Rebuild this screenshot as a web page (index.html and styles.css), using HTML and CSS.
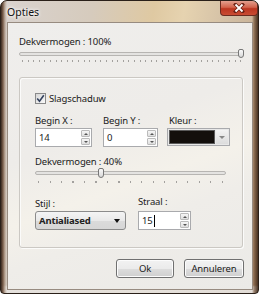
FILE: index.html
```html
<!DOCTYPE html>
<html>
<head>
<meta charset="utf-8">
<link rel="stylesheet" href="styles.css">
</head>
<body>
<div class="window">
  <div class="titlebar">
    <span class="title">Opties</span>
    <div class="close">
      <svg width="12" height="10" viewBox="0 0 12 10"><path d="M2.5 1.5 L9.5 8.5 M9.5 1.5 L2.5 8.5" stroke="#6a2215" stroke-width="3.4" stroke-linecap="square"/><path d="M2.5 1.5 L9.5 8.5 M9.5 1.5 L2.5 8.5" stroke="#ffffff" stroke-width="1.8"/></svg>
    </div>
  </div>
  <div class="client">
    <div class="label">Dekvermogen : 100%</div>
    <div class="slider s1">
      <div class="track"></div>
      <div class="thumb" style="left:219px"></div>
      <div class="ticks"></div>
    </div>
    <div class="group">
      <div class="check">
        <span class="box"><svg width="9" height="9" viewBox="0 0 9 9"><path d="M1.2 4.5 L3.5 7.3 L7.8 1.2" fill="none" stroke="#34425f" stroke-width="1.6"/></svg></span>
        <span>Slagschaduw</span>
      </div>
      <div class="grid3">
        <div class="lbl">Begin X :</div>
        <div class="lbl">Begin Y :</div>
        <div class="lbl">Kleur :</div>
        <div class="spin"><span class="val">14</span><span class="arrows"><span class="up"></span><span class="down"></span></span></div>
        <div class="spin"><span class="val">0</span><span class="arrows"><span class="up"></span><span class="down"></span></span></div>
        <div class="color"><span class="swatch"></span><span class="dd"><span class="tri"></span></span></div>
      </div>
      <div class="label l2">Dekvermogen : 40%</div>
      <div class="slider s2">
        <div class="track"></div>
        <div class="thumb" style="left:63px"></div>
        <div class="ticks"></div>
      </div>
      <div class="bottomrow">
        <div class="field">
          <div class="lbl">Stijl :</div>
          <div class="combo"><span class="ctext">Antialiased</span><span class="tri dark"></span></div>
        </div>
        <div class="field">
          <div class="lbl">Straal :</div>
          <div class="spin s3"><span class="val">15<span class="caret"></span></span><span class="arrows"><span class="up"></span><span class="down"></span></span></div>
        </div>
      </div>
    </div>
    <div class="buttons">
      <div class="btn ok">Ok</div>
      <div class="btn cancel">Annuleren</div>
    </div>
  </div>
</div>
</body>
</html>
```
FILE: styles.css
```css
html, body {
  margin: 0;
  padding: 0;
  background: #ffffff;
}
body {
  font-family: "Noto Sans", "Open Sans", sans-serif;
  font-size: 9.5px;
  letter-spacing: -0.15px;
  color: #1a1a1a;
}
.window {
  width: 259px;
  height: 294px;
  box-sizing: border-box;
  border: 1px solid #2a2019;
  border-radius: 7px 7px 4px 4px;
  background:
    linear-gradient(to bottom, rgba(0,0,0,0) 0, rgba(0,0,0,0) 40px, rgba(0,0,0,0) 100%),
    linear-gradient(to right, rgba(45,28,18,0.92) 0, rgba(100,68,46,0.8) 2px, rgba(150,120,95,0.45) 4px, rgba(255,255,255,0) 6px, rgba(255,255,255,0) 251px, rgba(110,75,48,0.6) 253px, rgba(60,38,22,0.9) 257px),
    linear-gradient(to bottom, rgba(255,255,255,0) 0, rgba(255,255,255,0) 284px, rgba(235,232,228,0.92) 286px, rgba(228,224,220,0.92) 292px),
    linear-gradient(100deg, #d9d3cf 0%, #d6cbbd 30%, #dfc9a2 50%, #e6d3b0 60%, #d2bfa5 75%, #c4ab8f 90%, #b19377 100%);
  display: flex;
  flex-direction: column;
  overflow: hidden;
}
.titlebar {
  height: 21px;
  display: flex;
  align-items: flex-start;
  justify-content: space-between;
}
.title {
  margin: 5px 0 0 6px;
  font-size: 10.5px;
  letter-spacing: 0;
  line-height: 13px;
  color: #111;
  text-shadow: 0 0 4px #fff, 0 0 3px #fff;
}
.close {
  width: 38px;
  height: 15px;
  box-sizing: border-box;
  border: 1px solid #6b2c20;
  border-top: none;
  border-radius: 0 0 4px 4px;
  background: linear-gradient(to bottom, #e3a08e 0%, #d2644c 45%, #bb3620 55%, #c94c33 100%);
  display: flex;
  align-items: center;
  justify-content: center;
}
.client {
  margin: 0 5px 3px 6px;
  width: 246px;
  height: 268px;
  box-sizing: border-box;
  border: 1px solid #978b80;
  background: linear-gradient(160deg, #efeeec 0%, #eeece9 40%, #f4f1ea 58%, #efede9 70%, #ebeae7 100%);
  padding: 12px 0 0 11px;
  display: flex;
  flex-direction: column;
  align-items: flex-start;
}
.label, .lbl {
  line-height: 14px;
  height: 14px;
  white-space: nowrap;
}
.slider {
  position: relative;
  height: 14px;
}
.slider .track {
  position: absolute;
  left: 0;
  right: 2px;
  top: 3px;
  height: 4px;
  box-sizing: border-box;
  border: 1px solid #b7b5b2;
  border-radius: 2px;
  background: #e4e3e1;
}
.slider .thumb {
  position: absolute;
  top: 0;
  width: 6px;
  height: 9px;
  box-sizing: border-box;
  border: 1px solid #777;
  border-radius: 2px 2px 3px 3px;
  background: linear-gradient(to bottom, #fafafa, #d9d9d9);
}
.slider .ticks {
  position: absolute;
  left: 3px;
  right: 3px;
  top: 11px;
  height: 2px;
  background: repeating-linear-gradient(to right, #a3a19e 0, #a3a19e 1px, transparent 1px, transparent 5.6px);
}
.s1 {
  width: 225px;
}
.group {
  margin-top: 14px;
  width: 224px;
  height: 171px;
  box-sizing: border-box;
  border: 1px solid #cbc8c3;
  border-radius: 3px;
  box-shadow: inset 1px 1px 0 #fbfbfa, 1px 1px 0 #fbfbfa;
  padding: 14px 0 0 15px;
  display: flex;
  flex-direction: column;
  align-items: flex-start;
}
.check {
  display: flex;
  align-items: center;
  gap: 3px;
  height: 13px;
}
.check .box {
  width: 11px;
  height: 11px;
  box-sizing: border-box;
  border: 1px solid #8a8a8a;
  background: linear-gradient(135deg, #d6d6d6, #fafafa);
  display: flex;
  align-items: center;
  justify-content: center;
}
.grid3 {
  margin-top: 9px;
  display: grid;
  grid-template-columns: 57px 55px 61px;
  column-gap: 11px;
}
.spin {
  height: 19px;
  box-sizing: border-box;
  border: 1px solid #a9aaad;
  background: #ffffff;
  display: flex;
  align-items: center;
  justify-content: space-between;
  padding: 0 1px 0 3px;
}
.grid3 .color {
  margin-left: -2px;
}
.val {
  line-height: 14px;
  display: flex;
  align-items: center;
}
.caret {
  display: inline-block;
  width: 1px;
  height: 12px;
  background: #000;
  margin-left: 1px;
}
.arrows {
  width: 9px;
  height: 15px;
  display: flex;
  flex-direction: column;
  gap: 1px;
}
.arrows .up, .arrows .down {
  flex: 1;
  border: 1px solid #bbb;
  border-radius: 1px;
  background: linear-gradient(to bottom, #f6f6f6, #dedede);
  position: relative;
}
.arrows .up::after, .arrows .down::after {
  content: "";
  position: absolute;
  left: 1.5px;
  top: 2px;
  border-left: 2px solid transparent;
  border-right: 2px solid transparent;
}
.arrows .up::after { border-bottom: 2px solid #555; }
.arrows .down::after { border-top: 2px solid #555; }
.color {
  height: 18px;
  box-sizing: border-box;
  border: 1px solid #a9aaad;
  background: #e8e8e8;
  display: flex;
  align-items: stretch;
  padding: 1px;
  gap: 1px;
}
.swatch {
  flex: 1;
  background: #130f0c;
  border: 1px solid #5a5a5a;
}
.dd {
  width: 12px;
  display: flex;
  align-items: center;
  justify-content: center;
  background: linear-gradient(to bottom, #f3f3f3, #dcdcdc);
}
.tri {
  width: 0;
  height: 0;
  border-left: 3px solid transparent;
  border-right: 3px solid transparent;
  border-top: 3px solid #888;
}
.tri.dark {
  border-top-color: #111;
  border-left-width: 3.5px;
  border-right-width: 3.5px;
  border-top-width: 4px;
}
.l2 {
  margin-top: 8px;
}
.s2 {
  width: 193px;
  margin-top: -1px;
}
.s2 .thumb { height: 10px; }
.s2 .ticks {
  top: 13px;
  background: repeating-linear-gradient(to right, #a3a19e 0, #a3a19e 1px, transparent 1px, transparent 11.5px);
}
.bottomrow {
  margin-top: 15px;
  display: flex;
  gap: 12px;
}
.bottomrow .field:last-child .lbl {
  margin-top: -2px;
  margin-bottom: 2px;
}
.combo {
  width: 91px;
  height: 19px;
  box-sizing: border-box;
  border: 1px solid #8b8b8b;
  border-radius: 3px;
  background: linear-gradient(to bottom, #f4f4f4 0%, #e9e9e9 50%, #dbdbdb 51%, #d6d6d6 100%);
  display: flex;
  align-items: center;
  justify-content: space-between;
  padding: 0 5px 0 3px;
}
.ctext {
  font-weight: bold;
  color: #222;
}
.s3 {
  width: 53px;
}
.buttons {
  margin-top: 11px;
  width: 225px;
  display: flex;
  justify-content: flex-end;
  gap: 10px;
}
.btn {
  height: 19px;
  box-sizing: border-box;
  border: 1px solid #707070;
  border-radius: 3px;
  background: linear-gradient(to bottom, #f2f2f2 0%, #ebebeb 50%, #dddddd 51%, #cfcfcf 100%);
  box-shadow: inset 0 0 0 1px #fcfcfc;
  display: flex;
  align-items: center;
  justify-content: center;
  line-height: 14px;
}
.ok { width: 58px; }
.cancel { width: 60px; }
```
